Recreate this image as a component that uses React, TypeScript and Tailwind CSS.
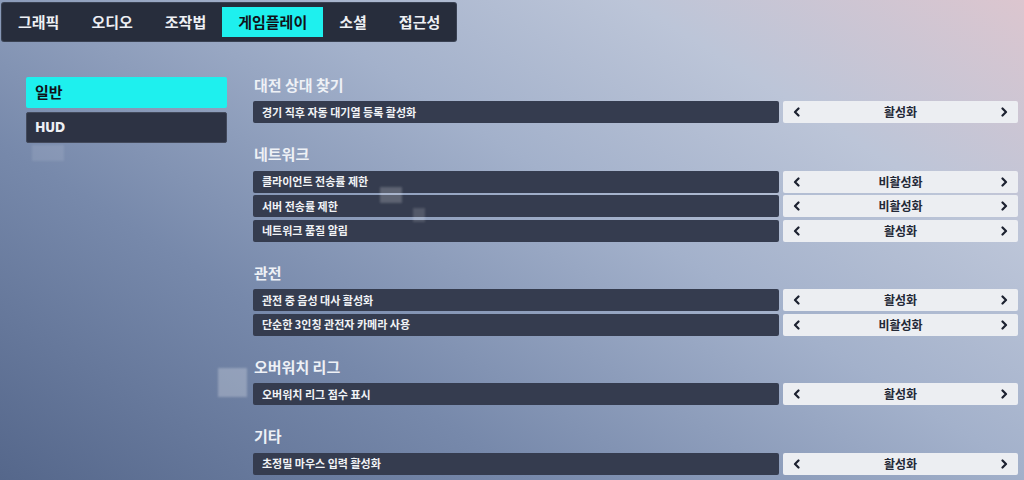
import React from "react";

type Row = { label: string; value: string };
type Section = { title: string; rows: Row[] };

const tabs = ["그래픽", "오디오", "조작법", "게임플레이", "소셜", "접근성"];

const sections: Section[] = [
  {
    title: "대전 상대 찾기",
    rows: [{ label: "경기 직후 자동 대기열 등록 활성화", value: "활성화" }],
  },
  {
    title: "네트워크",
    rows: [
      { label: "클라이언트 전송률 제한", value: "비활성화" },
      { label: "서버 전송률 제한", value: "비활성화" },
      { label: "네트워크 품질 알림", value: "활성화" },
    ],
  },
  {
    title: "관전",
    rows: [
      { label: "관전 중 음성 대사 활성화", value: "활성화" },
      { label: "단순한 3인칭 관전자 카메라 사용", value: "비활성화" },
    ],
  },
  {
    title: "오버워치 리그",
    rows: [{ label: "오버워치 리그 점수 표시", value: "활성화" }],
  },
  {
    title: "기타",
    rows: [{ label: "초정밀 마우스 입력 활성화", value: "활성화" }],
  },
];

const Chevron = ({ dir }: { dir: "left" | "right" }) => (
  <svg width="7" height="10" viewBox="0 0 7 10" className="shrink-0">
    <polyline
      points={dir === "left" ? "5.5,1.5 2,5 5.5,8.5" : "1.5,1.5 5,5 1.5,8.5"}
      fill="none"
      stroke="#1c2130"
      strokeWidth="2.2"
      strokeLinecap="round"
      strokeLinejoin="round"
    />
  </svg>
);

const SettingRow = ({ row }: { row: Row }) => (
  <div className="flex h-[22px] gap-[4px]">
    <div className="flex flex-1 items-center rounded-[2px] bg-[#353c4f] pl-[9px] text-[11px] font-bold text-[#f1f3f6]">
      {row.label}
    </div>
    <div className="flex w-[235px] items-center justify-between rounded-[2px] bg-[#eceef2] px-[10px] text-[12px] font-bold text-[#232836]">
      <Chevron dir="left" />
      <span>{row.value}</span>
      <Chevron dir="right" />
    </div>
  </div>
);

export default function App() {
  return (
    <div
      className="relative h-[480px] w-full overflow-hidden bg-[linear-gradient(32deg,#55678b_0%,#7789ab_30%,#a3b1cb_58%,#bcc5d8_78%,#dcc6cf_100%)]"
      style={{ fontFamily: '"Noto Sans CJK KR", "Noto Sans", sans-serif' }}
    >
      {/* blurred decorative squares */}
      <div className="absolute left-[32px] top-[145px] h-[16px] w-[32px] bg-white/10 blur-[1px]" />
      <div className="absolute left-[380px] top-[187px] z-10 h-[16px] w-[22px] bg-white/20 blur-[1px]" />
      <div className="absolute left-[413px] top-[208px] z-10 h-[14px] w-[12px] bg-white/15 blur-[1px]" />
      <div className="absolute left-[218px] top-[368px] h-[29px] w-[29px] bg-white/25 blur-[1px]" />

      <div className="pl-[2px] pt-[3px]">
        <div className="inline-flex h-[38px] items-center rounded-[2px] bg-[#272d3c] ring-1 ring-[#3a4253]">
          {tabs.map((t) => (
            <div
              key={t}
              className={
                t === "게임플레이"
                  ? "flex h-[30px] shrink-0 items-center whitespace-nowrap bg-[#1ef0ee] px-4 text-[15px] font-bold text-[#10131a]"
                  : "flex h-[30px] shrink-0 items-center whitespace-nowrap px-4 text-[15px] font-bold text-[#eef0f4]"
              }
            >
              {t}
            </div>
          ))}
        </div>
      </div>

      <div className="mt-[33px] flex gap-[26px] pl-[26px] pr-[6px]">
        <div className="mt-[3px] flex w-[201px] flex-col gap-[4px]">
          <div className="flex h-[31px] items-center rounded-[2px] bg-[#1ef0ee] pl-[9px] text-[15px] font-bold text-[#10131a]">
            일반
          </div>
          <div className="flex h-[31px] items-center rounded-[2px] border border-[#434a5c] bg-[#2d3344] pl-[8px] font-['DejaVu_Sans',sans-serif] text-[14px] font-bold font-stretch-condensed tracking-[-0.5px] text-[#eef0f4]">
            HUD
          </div>
        </div>

        <div className="flex flex-1 flex-col gap-[20.5px]">
          {sections.map((s) => (
            <div key={s.title} className="flex flex-col">
              <div className="mb-[5px] flex h-[22px] items-center pl-[1px] text-[15px] font-bold text-[#eef1f6]">
                {s.title}
              </div>
              <div className="flex flex-col gap-[2.5px]">
                {s.rows.map((r) => (
                  <SettingRow key={r.label} row={r} />
                ))}
              </div>
            </div>
          ))}
        </div>
      </div>
    </div>
  );
}
